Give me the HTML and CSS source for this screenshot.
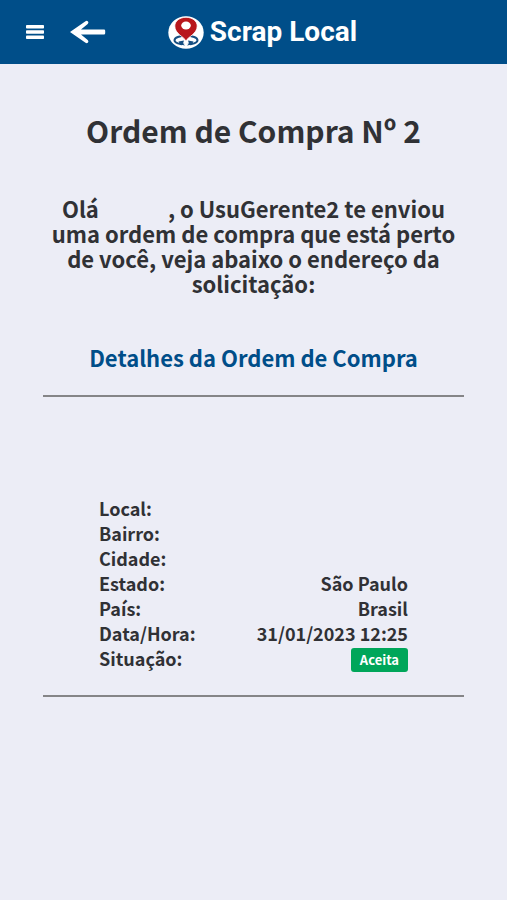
FILE: index.html
```html
<!DOCTYPE html>
<html lang="pt-BR">
<head>
<meta charset="utf-8">
<meta name="viewport" content="width=device-width, initial-scale=1">
<title>Scrap Local</title>
<link rel="stylesheet" href="styles.css">
</head>
<body>
<header class="topbar">
  <nav class="actions">
    <button class="icon-button" type="button" aria-label="Menu">
      <svg width="18" height="16" viewBox="0 0 18 16" fill="#fff" aria-hidden="true"><rect y="1" width="18" height="3.6" rx=".8"/><rect y="6.2" width="18" height="3.6" rx=".8"/><rect y="11.4" width="18" height="3.6" rx=".8"/></svg>
    </button>
    <a class="icon-button" href="#" aria-label="Voltar">
      <svg width="36" height="24" viewBox="0 0 36 24" aria-hidden="true"><path d="M0 12 15.500 1.200q1.500-.9 2.500.4t-.3 2.500L11 9.600H34q1.200 0 1.200 1.200v2.400q0 1.200-1.200 1.200H11l6.700 5.500q1.300 1.200.3 2.500t-2.500.4Z" fill="#fff"/></svg>
    </a>
  </nav>
  <a class="brand" href="#">
    <svg width="36" height="33" viewBox="0 0 36 33" aria-hidden="true">
      <ellipse cx="18" cy="16.500" rx="17.700" ry="16.200" fill="#fff"/>
      <ellipse cx="18" cy="24.200" rx="11.500" ry="4.500" fill="none" stroke="#174f82" stroke-width="2"/>
      <path d="M12.500 30.500 18 26l5.500 4.500Z" fill="#fff"/>
      <path d="M10.500 25.500l5.500-1-1 3 2 2-5-1Zm15 0-5.500-1 1 3-2 2 5-1Z" fill="#174f82"/>
      <path d="M18 25C16 20.500 6.800 18 6.800 10 6.800 4.800 12 1.300 18 1.300s11.200 3.500 11.200 8.700C29.200 18 20 20.500 18 25Z" fill="#b8171c" stroke="#fff" stroke-width=".8"/>
      <ellipse cx="18" cy="9.500" rx="4.800" ry="4" fill="#fff"/>
    </svg>
    <span>Scrap Local</span>
  </a>
</header>
<main class="content">
  <h1 class="title">Ordem de Compra Nº 2</h1>
  <p class="message">Olá <span class="name"></span>, o UsuGerente2 te enviou uma ordem de compra que está perto de você, veja abaixo o endereço da solicitação:</p>
  <h2 class="subtitle">Detalhes da Ordem de Compra</h2>
  <section class="details">
    <dl class="list">
      <div class="row"><dt>Local:</dt><dd></dd></div>
      <div class="row"><dt>Bairro:</dt><dd></dd></div>
      <div class="row"><dt>Cidade:</dt><dd></dd></div>
      <div class="row"><dt>Estado:</dt><dd>São Paulo</dd></div>
      <div class="row"><dt>País:</dt><dd>Brasil</dd></div>
      <div class="row"><dt>Data/Hora:</dt><dd>31/01/2023 12:25</dd></div>
      <div class="row"><dt>Situação:</dt><dd class="status"><span class="badge">Aceita</span></dd></div>
    </dl>
  </section>
</main>
</body>
</html>
```

FILE: styles.css
```css
* {
  box-sizing: border-box;
}

body {
  margin: 0;
  min-height: 100vh;
  background: #ecedf6;
  color: #303135;
  font-family: "Noto Sans CJK JP", "Noto Sans", sans-serif;
  font-weight: 700;
}

h1, h2, p, dl, dd {
  margin: 0;
}

.topbar {
  display: grid;
  grid-template-columns: 1fr auto 1fr;
  align-items: center;
  height: 64px;
  padding: 0 24px;
  background: #004e89;
}

.actions {
  display: flex;
  align-items: center;
  gap: 22px;
}

.icon-button {
  display: flex;
  padding: 0 2px;
  border: 0;
  background: none;
}

.brand {
  display: flex;
  grid-column: 2;
  align-items: center;
  gap: 6px;
  margin-left: 18px;
  color: #fff;
  font-family: Roboto, "Liberation Sans", sans-serif;
  font-size: 28px;
  line-height: 32px;
  text-decoration: none;
}

.content {
  padding: 46px 43px;
  text-align: center;
}

.title {
  font-size: 30px;
  line-height: 40px;
}

.message {
  margin-top: 46px;
  font-size: 22px;
  line-height: 25px;
}

.name {
  display: inline-block;
  width: 64px;
}

.subtitle {
  margin-top: 45px;
  color: #004e89;
  font-size: 22px;
  line-height: 32px;
}

.details {
  margin-top: 22px;
  padding: 99px 56px 23px;
  border: solid #858587;
  border-width: 2px 0;
}

.row {
  display: flex;
  justify-content: space-between;
  font-size: 18px;
  line-height: 25px;
}

.status {
  display: flex;
  padding-top: 2px;
}

.badge {
  padding: 0 9px;
  border-radius: 3px;
  background: #00a65a;
  color: #fff;
  font-size: 13px;
  line-height: 24px;
}
```
